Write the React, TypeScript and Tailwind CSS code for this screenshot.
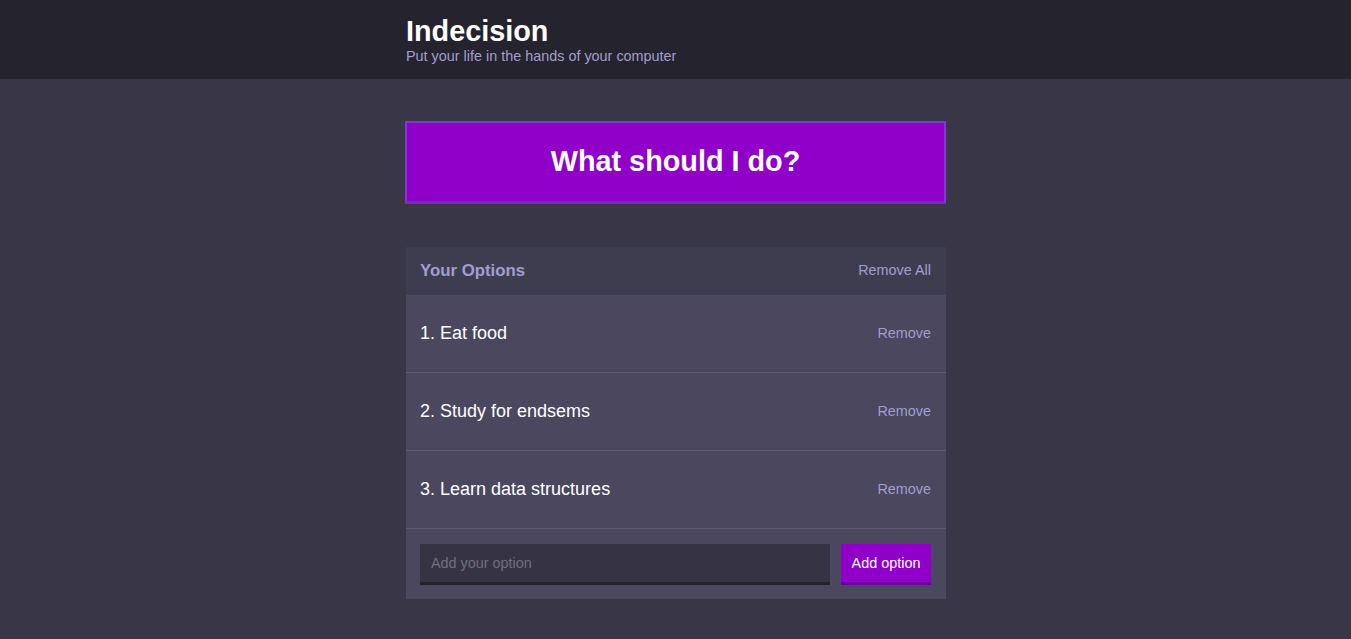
import React, { useState } from 'react';

const initialOptions = ['Eat food', 'Study for endsems', 'Learn data structures'];

export default function App() {
    const [options, setOptions] = useState<string[]>(initialOptions);
    const [draft, setDraft] = useState('');

    const addOption = (e: React.FormEvent) => {
        e.preventDefault();
        const value = draft.trim();
        if (!value) return;
        setOptions([...options, value]);
        setDraft('');
    };

    return (
        <div className="min-h-screen bg-[#393747] text-white font-['Liberation_Sans',Arial,sans-serif]">
            {/* Header */}
            <div className="bg-[#25232e] h-[79px]">
                <div className="w-[541px] mx-auto pl-px pt-[15px]">
                    <h1 className="text-[28.8px] font-bold leading-[32px] text-white">Indecision</h1>
                    <h2 className="text-[14.4px] leading-[18px] text-[#a19ed0]">Put your life in the hands of your computer</h2>
                </div>
            </div>

            <div className="w-[541px] mx-auto pl-px pt-[42px]">
                <button className="-ml-px w-[541px] h-[83px] bg-[#9000c8] border-2 border-[#7c3ad0] border-b-[3px] border-b-[#6f2fc0] text-[28.8px] font-bold text-white">
                    What should I do?
                </button>

                {/* Options widget */}
                <div className="mt-[43px] w-[540px] bg-[#4a475f]">
                    <div className="h-[48px] bg-[#3e3d4f] flex items-center justify-between pl-[14px] pr-[15px]">
                        <h3 className="text-[16.8px] font-bold text-[#a19ed0]">Your Options</h3>
                        <button className="text-[14.4px] text-[#a19ed0]" onClick={() => setOptions([])}>Remove All</button>
                    </div>
                    {options.map((option, i) => (
                        <div key={option} className="h-[78px] flex items-center justify-between pl-[14px] pr-[15px] border-b border-[#5f5b73]">
                            <p className="text-[18px] text-white">{i + 1}. {option}</p>
                            <button
                                className="text-[14.4px] text-[#a19ed0]"
                                onClick={() => setOptions(options.filter(o => o !== option))}
                            >
                                Remove
                            </button>
                        </div>
                    ))}
                    <form onSubmit={addOption} className="flex items-center gap-[11px] pl-[14px] pr-[15px] pt-[15px] pb-[14px]">
                        <input
                            value={draft}
                            onChange={e => setDraft(e.target.value)}
                            placeholder="Add your option"
                            className="flex-1 h-[41px] bg-[#363444] border-b-[3px] border-[#24222c] px-[11px] text-[14.4px] text-white placeholder:text-[#716e80] outline-none"
                        />
                        <button className="w-[90px] h-[41px] pt-px bg-[#9000c8] border-b-[3px] border-[#6d00a0] text-[14.4px] text-white">
                            Add option
                        </button>
                    </form>
                </div>
            </div>
        </div>
    );
}
